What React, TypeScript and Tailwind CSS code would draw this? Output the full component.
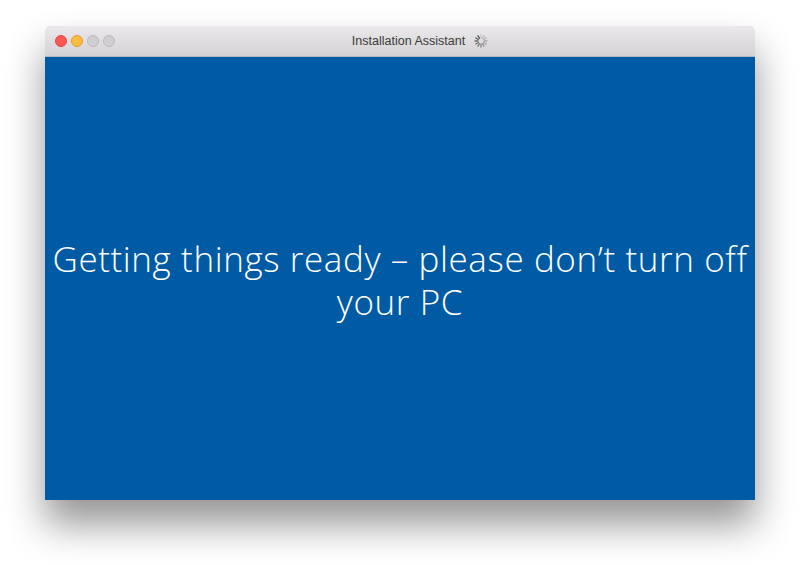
function Spinner() {
  const spokes = Array.from({ length: 12 }, (_, i) => i);
  return (
    <svg className="w-[14px] h-[14px]" viewBox="0 0 14 14">
      {spokes.map((i) => (
        <line
          key={i}
          x1="7"
          y1="1"
          x2="7"
          y2="4"
          stroke="#555"
          strokeWidth="1.3"
          strokeLinecap="round"
          opacity={0.2 + (i / 11) * 0.8}
          transform={`rotate(${i * 30} 7 7)`}
        />
      ))}
    </svg>
  );
}

export default function App() {
  return (
    <div className="w-[800px] h-[565px] bg-white pt-[26px] pl-[45px]">
      <div className="w-[710px] flex flex-col shadow-[0_24px_38px_rgba(0,0,0,0.42)] rounded-t-[5px]">
        <div className="relative h-[31px] flex items-center justify-center rounded-t-[5px] border-b border-[#b9b7b9] bg-gradient-to-b from-[#ebe9eb] to-[#d4d2d4]">
          <div className="absolute left-[10px] top-[9px] flex gap-[4px]">
            <span className="w-[12px] h-[12px] rounded-full bg-[#fc5753] border border-[#df4744]" />
            <span className="w-[12px] h-[12px] rounded-full bg-[#fdbc40] border border-[#de9f34]" />
            <span className="w-[12px] h-[12px] rounded-full bg-[#d0ced0] border border-[#bcbabc]" />
            <span className="w-[12px] h-[12px] rounded-full bg-[#d0ced0] border border-[#bcbabc]" />
          </div>
          <div className="flex items-center gap-[9px] ml-[40px]">
            <span className="text-[12.5px] text-[#3b3b3b] font-['Liberation_Sans',sans-serif]">Installation Assistant</span>
            <Spinner />
          </div>
        </div>
        <div className="h-[443px] bg-[#005ba4] flex items-center justify-center">
          <p className="text-white text-center font-['Open_Sans',sans-serif] font-light text-[35px] tracking-[0.6px] leading-[43px] px-[4px] mt-[2px]">
            Getting things ready – please don’t turn off your PC
          </p>
        </div>
      </div>
    </div>
  );
}
